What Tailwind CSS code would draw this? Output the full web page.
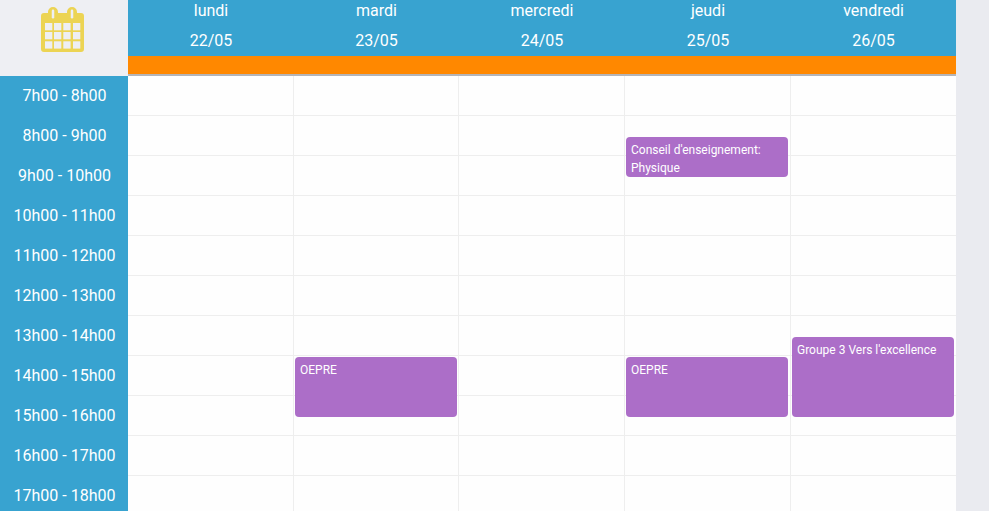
<!DOCTYPE html>
<html lang="fr">
<head>
  <meta charset="UTF-8">
  <title>Emploi du temps</title>
  <script src="https://cdn.jsdelivr.net/npm/@tailwindcss/browser@4"></script>
</head>
<body class="h-[511px] overflow-hidden bg-[#eaebf0] font-['Roboto',sans-serif] text-white">
  <div class="flex w-[956px]">
    <!-- colonne des horaires -->
    <div class="w-[128px] shrink-0">
      <div class="h-[76px] bg-[#eeeff3] pl-[41px] pt-[7px]">
        <svg width="43" height="45" viewBox="0 0 43 45" class="block">
          <path fill="#ecd453" d="M3 6h4V5a5 5 0 0 1 10 0v1h9V5a5 5 0 0 1 10 0v1h4a3 3 0 0 1 3 3v33a3 3 0 0 1-3 3H3a3 3 0 0 1-3-3V9a3 3 0 0 1 3-3z"/>
          <g fill="#eeeff3">
            <rect x="10.750" y="2.500" width="2.500" height="9" rx="1.200"/>
            <rect x="29.750" y="2.500" width="2.500" height="9" rx="1.200"/>
            <rect x="4" y="16" width="7.300" height="7.300"/><rect x="13" y="16" width="7.300" height="7.300"/><rect x="22.300" y="16" width="7.300" height="7.300"/><rect x="32" y="16" width="7.300" height="7.300"/>
            <rect x="4" y="25" width="7.300" height="7.300"/><rect x="13" y="25" width="7.300" height="7.300"/><rect x="22.300" y="25" width="7.300" height="7.300"/><rect x="32" y="25" width="7.300" height="7.300"/>
            <rect x="4" y="34.300" width="7.300" height="7.300"/><rect x="13" y="34.300" width="7.300" height="7.300"/><rect x="22.300" y="34.300" width="7.300" height="7.300"/><rect x="32" y="34.300" width="7.300" height="7.300"/>
          </g>
        </svg>
      </div>
      <div id="hours" class="bg-[#38a3d0]"></div>
    </div>

    <div class="flex-1">
      <!-- en-tete des jours -->
      <div class="grid h-[56px] grid-cols-[166px_165px_166px_166px_165px] bg-[#38a3d0] pt-[1px] text-center text-base">
        <div><div class="h-[20px] leading-[20px]">lundi</div><div class="mt-[10px] h-[20px] leading-[20px]">22/05</div></div>
        <div><div class="h-[20px] leading-[20px]">mardi</div><div class="mt-[10px] h-[20px] leading-[20px]">23/05</div></div>
        <div><div class="h-[20px] leading-[20px]">mercredi</div><div class="mt-[10px] h-[20px] leading-[20px]">24/05</div></div>
        <div><div class="h-[20px] leading-[20px]">jeudi</div><div class="mt-[10px] h-[20px] leading-[20px]">25/05</div></div>
        <div><div class="h-[20px] leading-[20px]">vendredi</div><div class="mt-[10px] h-[20px] leading-[20px]">26/05</div></div>
      </div>
      <div class="h-[18px] bg-[#ff8800]"></div>
      <div class="h-[2px] bg-[#b4b4b8]"></div>

      <!-- grille -->
      <div class="grid grid-cols-[166px_165px_166px_166px_165px] bg-[#fefefe] text-xs leading-[18px]">
        <div class="day relative border-r border-[#eeeeee]"></div>
        <div class="day relative border-r border-[#eeeeee]">
          <div class="absolute left-[1px] right-[1px] top-[281px] h-[60px] rounded-[4px] bg-[#ac6ec8] px-[5px] pt-[4px]">OEPRE</div>
        </div>
        <div class="day relative border-r border-[#eeeeee]"></div>
        <div class="day relative border-r border-[#eeeeee]">
          <div class="absolute left-[1px] right-[2px] top-[61px] h-[40px] rounded-[4px] bg-[#ac6ec8] px-[5px] pt-[4px]">Conseil d'enseignement: Physique</div>
          <div class="absolute left-[1px] right-[2px] top-[281px] h-[60px] rounded-[4px] bg-[#ac6ec8] px-[5px] pt-[4px]">OEPRE</div>
        </div>
        <div class="day relative">
          <div class="absolute left-[1px] right-[2px] top-[261px] h-[80px] rounded-[4px] bg-[#ac6ec8] px-[5px] pt-[4px]">Groupe 3 Vers l'excellence</div>
        </div>
      </div>
    </div>
  </div>

  <script>
    const hours = document.getElementById('hours');
    for (let h = 7; h < 18; h++) {
      const row = document.createElement('div');
      row.className = 'h-[40px] pl-[1px] pt-[10px] text-center text-base leading-[20px]';
      row.textContent = h + 'h00 - ' + (h + 1) + 'h00';
      hours.appendChild(row);
    }
    document.querySelectorAll('.day').forEach(day => {
      for (let i = 0; i < 11; i++) {
        const cell = document.createElement('div');
        cell.className = 'h-[40px] border-b border-[#eeeeee]';
        day.insertBefore(cell, day.firstChild);
      }
    });
  </script>
</body>
</html>
